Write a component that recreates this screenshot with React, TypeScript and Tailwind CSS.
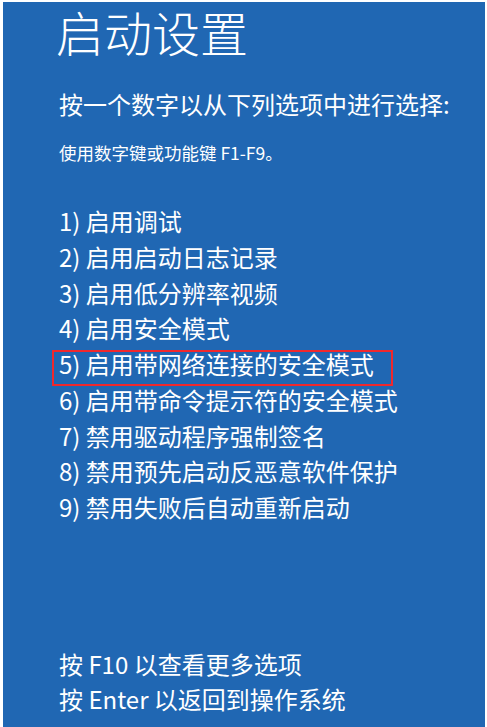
const OPTIONS = [
  "1) 启用调试",
  "2) 启用启动日志记录",
  "3) 启用低分辨率视频",
  "4) 启用安全模式",
  "5) 启用带网络连接的安全模式",
  "6) 启用带命令提示符的安全模式",
  "7) 禁用驱动程序强制签名",
  "8) 禁用预先启动反恶意软件保护",
  "9) 禁用失败后自动重新启动",
];

export default function App() {
  return (
    <div className="w-[487px] h-[727px] bg-white pt-[2px] pl-[3px] pr-[2px] overflow-hidden">
      <div
        className="h-[725px] bg-[#2067b3] text-white flex flex-col pl-[56px] pb-[11px]"
        style={{ fontFamily: '"Noto Sans CJK SC", "Noto Sans", sans-serif' }}
      >
        {/* Title */}
        <h1 className="mt-[1px] -ml-[3px] h-[56px] text-[48px] leading-[56px] font-light">启动设置</h1>

        <p className="mt-[27px] h-[36px] text-[24px] leading-[36px]">按一个数字以从下列选项中进行选择:</p>
        <p className="mt-[19px] h-[24px] text-[17.5px] leading-[24px]">使用数字键或功能键 F1-F9。</p>

        {/* Options */}
        <ul className="mt-[38px] flex flex-col">
          {OPTIONS.map((o, i) => (
            <li key={o} className="relative h-[35.75px] text-[24px] leading-[35.75px] whitespace-nowrap">
              {o}
              {i === 4 && (
                <span className="absolute -left-[7px] top-[4px] w-[341px] h-[36px] border-2 border-[#f0282d] pointer-events-none" />
              )}
            </li>
          ))}
        </ul>

        <div className="mt-auto flex flex-col text-[24px] leading-[35px]">
          <p>按 F10 以查看更多选项</p>
          <p>按 Enter 以返回到操作系统</p>
        </div>
      </div>
    </div>
  );
}
